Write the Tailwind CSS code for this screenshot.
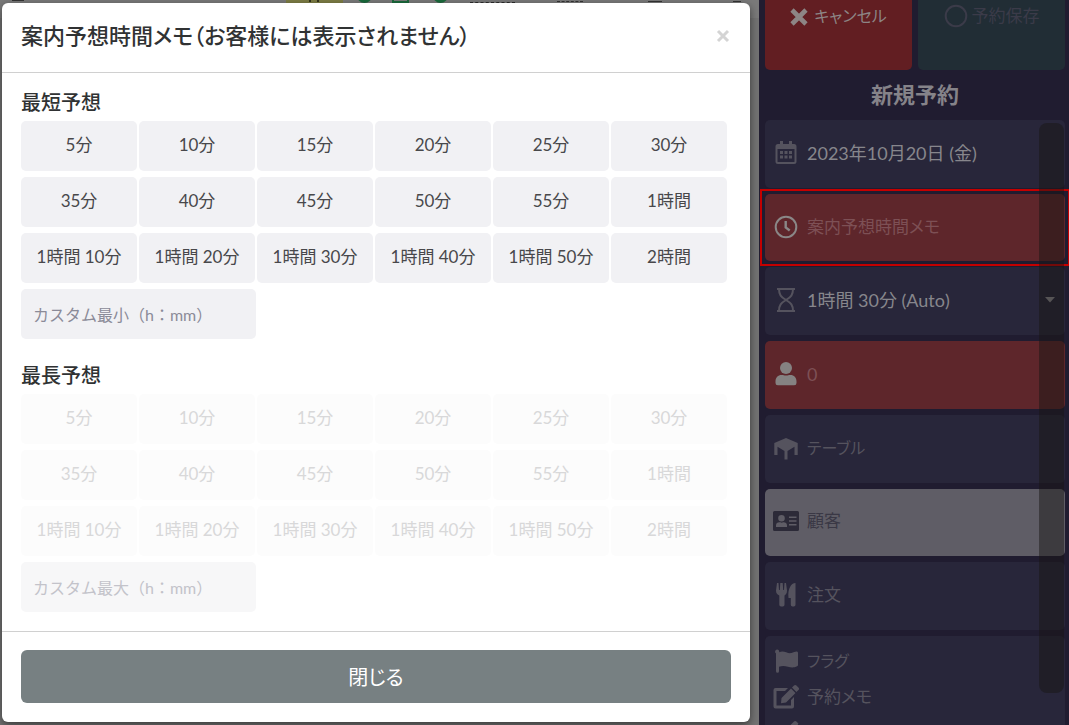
<!DOCTYPE html>
<html lang="ja">
<head>
    <meta charset="UTF-8">
    <meta name="viewport" content="width=device-width, initial-scale=1.0">
    <title>新規予約</title>
    <script src="https://cdn.jsdelivr.net/npm/@tailwindcss/browser@4"></script>
</head>
<body class="flex h-screen overflow-hidden bg-[#737373] font-[Lato,'Noto_Sans_CJK_JP',sans-serif] text-[17px] leading-6 text-[#303233]">

    <!-- Modal -->
    <main class="relative flex-1 min-w-0 pt-[3px] pl-0.5 pr-[9px]">
        <!-- Toolbar behind the modal -->
        <div class="absolute inset-x-0 top-0 h-[18px] bg-[#7a7a7a]" aria-hidden="true">
            <div class="absolute left-3 top-0 h-px w-3 bg-[#333]"></div>
            <div class="absolute left-[286px] top-0 h-1 w-[57px] bg-[#7d7d45]"></div>
            <div class="absolute left-[309px] top-0 h-0.5 w-2.5 border-x-2 border-[#33331c]"></div>
            <div class="absolute left-[357px] -top-3 size-[15px] rounded-full bg-[#1a6a3c]"></div>
            <div class="absolute left-[392px] -top-3 h-[15px] w-[17px] border-2 border-[#1a6a3c]"></div>
            <div class="absolute left-[433px] -top-3 size-[15px] rounded-full bg-[#1a6a3c]"></div>
            <div class="absolute left-[470px] top-0 h-[3px] w-[45px] border-b border-dashed border-[#2c2c2c]"></div>
            <div class="absolute left-[557px] top-0 h-0.5 w-[26px] border-b border-dashed border-[#333]"></div>
            <div class="absolute left-[648px] top-0 h-0.5 w-[14px] border-b border-[#333]"></div>
            <div class="absolute left-[733px] top-0 h-0.5 w-2 border-b border-[#333]"></div>
        </div>

        <section role="dialog" aria-labelledby="modalTitle" class="relative rounded-md bg-white shadow-[0_3px_9px_rgba(0,0,0,0.5)]">
            <header class="flex h-[70px] items-center justify-between border-b border-[#d0d0d0] px-[19px] pb-1">
                <h1 id="modalTitle" class="text-[22px] leading-8 font-medium [font-feature-settings:'palt']">案内予想時間メモ（お客様には表示されません）</h1>
                <button type="button" aria-label="閉じる" class="size-4 text-[#d4d4d4]">
                    <svg viewBox="0 0 16 16" class="size-4" fill="none" stroke="currentColor" stroke-width="3"><path d="M3 3l10 10M13 3L3 13"/></svg>
                </button>
            </header>

            <div class="pl-[19px] pr-[23px] pt-[15px] pb-[19px]">
                <h2 class="pb-[5px] text-[20px] leading-7 font-medium">最短予想</h2>
                <div id="minOptions" class="grid grid-cols-6 gap-x-0.5 gap-y-1.5"></div>
                <input type="text" aria-label="カスタム最小" placeholder="カスタム最小（h：mm）" class="mt-1.5 block h-[50px] w-1/3 rounded-[5px] bg-[#f1f1f4] px-3 text-base placeholder:text-[#8b8b98]">

                <h2 class="pt-[22px] pb-[5px] text-[20px] leading-7 font-medium">最長予想</h2>
                <div id="maxOptions" class="grid grid-cols-6 gap-x-0.5 gap-y-1.5"></div>
                <input type="text" disabled aria-label="カスタム最大" placeholder="カスタム最大（h：mm）" class="mt-1.5 block h-[50px] w-1/3 rounded-[5px] bg-[#f7f7f8] px-3 text-base placeholder:text-[#c3c3ca]">
            </div>

            <footer class="border-t border-[#d0d0d0] px-[19px] pt-[18px] pb-[19px]">
                <button type="button" class="block h-[53px] w-full rounded-md bg-[#778082] text-[20px] text-white [font-feature-settings:'palt']">閉じる</button>
            </footer>
        </section>
    </main>

    <!-- Reservation sidebar -->
    <aside class="relative w-[310px] shrink-0 bg-[#201c30] pl-1.5 pr-1 text-[#55535e]">
        <div class="grid h-[70px] grid-cols-2 gap-1.5">
            <button type="button" class="flex items-start justify-center gap-1.5 rounded-b-[5px] bg-[#621e22] pt-1 text-base text-[#8d8585] [font-feature-settings:'palt']">
                <svg viewBox="0 0 18 18" class="mt-1 size-[18px]" fill="none" stroke="currentColor" stroke-width="4.6"><path d="M2 2l14 14M16 2L2 16"/></svg>
                キャンセル
            </button>
            <button type="button" disabled class="flex items-start justify-center gap-1 rounded-b-[5px] bg-[#212d35] pt-1 text-[#3b3b49]">
                <svg viewBox="0 0 24 24" class="size-6" fill="none" stroke="currentColor" stroke-width="2"><circle cx="12" cy="12" r="10.3"/></svg>
                予約保存
            </button>
        </div>

        <h2 class="flex h-[50px] items-center justify-center text-[22px] font-bold text-[#858389]">新規予約</h2>

        <div class="grid h-[510px] auto-rows-fr gap-1.5">
            <button type="button" class="flex items-center rounded-[5px] bg-[#28263a] pb-0.5 pl-2 text-left">
                <svg viewBox="0 0 26 26" class="mr-2 size-[26px]" fill="currentColor">
                    <path fill-rule="evenodd" d="M7 1h3v3h6V1h3v3h2a2.500 2.500 0 0 1 2.500 2.500v15A2.500 2.500 0 0 1 21 24H5a2.500 2.500 0 0 1-2.500-2.500v-15A2.500 2.500 0 0 1 5 4h2zM4.500 9v12.500a.5.5 0 0 0 .5.5h16a.5.5 0 0 0 .5-.5V9z"/>
                    <path d="M7 11h3v3H7zM11.500 11h3v3h-3zM16 11h3v3h-3zM7 15.500h3v3H7zM11.500 15.500h3v3h-3zM16 15.500h3v3h-3z"/>
                </svg>
                <span class="text-[18px] text-[#87868c]">2023年10月20日 (金)</span>
            </button>
            <div class="grid outline-2 outline-offset-[3px] outline-[#c40000]">
                <button type="button" class="flex items-center rounded-[5px] bg-[#5e262b] pb-0.5 pl-2 text-left">
                    <svg viewBox="0 0 26 26" class="mr-2 size-[26px] text-[#8a8787]" fill="none" stroke="currentColor"><circle cx="13" cy="13" r="10.300" stroke-width="2"/><path d="M12.700 7v6.500l4 3" stroke-width="2.400"/></svg>
                    <span class="text-[#7d5055] [font-feature-settings:'palt']">案内予想時間メモ</span>
                </button>
            </div>
            <button type="button" class="flex items-center rounded-[5px] bg-[#28263a] pb-0.5 pl-2 pr-2.5 text-left">
                <svg viewBox="0 0 26 26" class="mr-2 size-[26px]" fill="none" stroke="currentColor" stroke-width="2"><path d="M4 2h18M4 24h18M6 2c0 6 2 8 7 11c5-3 7-5 7-11M6 24c0-6 2-8 7-11c5 3 7 5 7 11"/></svg>
                <span class="flex-1 text-[18px] text-[#87868c]">1時間 30分 (Auto)</span>
                <svg viewBox="0 0 10 6" class="h-1.5 w-2.5 text-[#8f8d90]" fill="currentColor"><path d="M0 0h10L5 5.500z"/></svg>
            </button>
            <button type="button" class="flex items-center rounded-[5px] bg-[#5e262b] pb-0.5 pl-2 text-left">
                <svg viewBox="0 0 26 26" class="mr-2 size-[26px] text-[#858282]" fill="currentColor"><circle cx="13" cy="7" r="6"/><path d="M2.500 20.500c0-4 2.500-6.500 6-6.500c2 0 2.500.6 4.500.6s2.500-.6 4.500-.6c3.500 0 6 2.500 6 6.500V22a2.300 2.300 0 0 1-2.300 2.300H4.800A2.300 2.300 0 0 1 2.500 22z"/></svg>
                <span class="text-[18px] text-[#7d5055]">0</span>
            </button>
            <button type="button" class="flex items-center rounded-[5px] bg-[#28263a] pb-0.5 pl-2 text-left">
                <svg viewBox="0 0 26 26" class="mr-2 size-[26px]" fill="currentColor"><path d="M13 3l11.700 5v12H21.500v-8.300L14.500 16v8.500h-3V16L4.500 11.700V20H1.300V8z"/></svg>
                <span class="text-base [font-feature-settings:'palt']">テーブル</span>
            </button>
            <button type="button" class="flex items-center rounded-[5px] bg-[#5f5d66] pb-0.5 pl-2 text-left text-[#2c2a38]">
                <svg viewBox="0 0 26 26" class="mr-2 size-[26px]" fill="currentColor">
                    <path fill-rule="evenodd" d="M1.500 3h23A1.500 1.500 0 0 1 26 4.500v17a1.500 1.500 0 0 1-1.500 1.500h-23A1.500 1.500 0 0 1 0 21.500v-17A1.500 1.500 0 0 1 1.500 3zM8.500 7a3.300 3.300 0 1 0 0 6.600a3.300 3.300 0 0 0 0-6.600zM3 19h11v-1.500c0-2-1.500-3.200-3.300-3.200c-1 0-1.200.4-2.200.4s-1.200-.4-2.200-.4C4.500 14.300 3 15.500 3 17.500zM16 8.500v1.600h7.500V8.500zm0 3.700v1.600h7.500v-1.600zm0 3.700v1.600h7.500v-1.600z"/>
                </svg>
                <span class="text-[#3a3845]">顧客</span>
            </button>
            <button type="button" class="flex items-center rounded-[5px] bg-[#28263a] pb-0.5 pl-2 text-left">
                <svg viewBox="0 0 26 26" class="mr-2 size-[26px]" fill="currentColor"><path d="M4 1h1.500l.5 7h.8L7.300 1h2.400l.5 7h.8l.5-7H13l1 7.500c0 3-1.200 4.200-2.500 5v9.300a1.700 1.700 0 0 1-1.700 1.700H8a1.700 1.700 0 0 1-1.700-1.700v-9.300C4.500 12.700 3 11.500 3 8.500zM22.500 1v21.800a1.700 1.700 0 0 1-1.700 1.700h-1.300a1.700 1.700 0 0 1-1.700-1.700V16H15.500C14.500 7 18 1 22.500 1z"/></svg>
                <span>注文</span>
            </button>
        </div>

        <div class="mt-1.5 flex flex-col gap-2.5 rounded-t-[5px] bg-[#28263a] pl-2 pt-3">
            <button type="button" class="flex items-center text-left">
                <svg viewBox="0 0 26 26" class="mr-2 size-[26px]" fill="currentColor"><path d="M4 1.500a2.200 2.200 0 0 1 2.200 2.700c5-2.200 8 1.800 12.300.8c2-.4 3.500-1.500 5-1.500c.9 0 1.500.6 1.500 1.400V17c0 .6-.3 1-.9 1.300c-6.600 3.400-10.600-2-18.100.5v4.400a1.500 1.500 0 0 1-3 0V5.500A2.200 2.200 0 0 1 4 1.500z"/></svg>
                <span class="text-base [font-feature-settings:'palt']">フラグ</span>
            </button>
            <button type="button" class="flex items-center text-left">
                <svg viewBox="0 0 26 26" class="mr-2 size-[26px]" fill="currentColor"><path d="M2.500 4H15l-3 3H3.500v14.500H18V16l3-3v9.500a2 2 0 0 1-2 2H2.500a2 2 0 0 1-2-2V6a2 2 0 0 1 2-2zM18 4.500l4.500 4.500L13 18.500l-5 .8l.5-5.300zM19 3.500l2-2a1.700 1.700 0 0 1 2.400 0l2 2a1.700 1.700 0 0 1 0 2.500l-2 2z"/></svg>
                <span class="[font-feature-settings:'palt']">予約メモ</span>
            </button>
            <svg viewBox="0 0 26 26" class="size-[26px]" fill="currentColor" aria-hidden="true"><path d="M19 3.500l2-2a1.700 1.700 0 0 1 2.400 0l2 2L22.500 9L13 18.500l-5 .8l.5-5.300z"/></svg>
        </div>

        <!-- Scrollbar thumb over the cards -->
        <div class="absolute right-[5px] top-[123px] h-[570px] w-[25px] rounded-lg bg-[#171614]/47"></div>
    </aside>

    <script>
        const labels = [
            '5分', '10分', '15分', '20分', '25分', '30分',
            '35分', '40分', '45分', '50分', '55分', '1時間',
            '1時間 10分', '1時間 20分', '1時間 30分', '1時間 40分', '1時間 50分', '2時間'
        ];

        function renderOptions(id, className, disabled) {
            const container = document.getElementById(id);
            labels.forEach(label => {
                const button = document.createElement('button');
                button.type = 'button';
                button.className = className;
                button.disabled = disabled;
                button.textContent = label;
                container.appendChild(button);
            });
        }

        renderOptions('minOptions', 'h-[50px] rounded-[5px] bg-[#f1f1f4] pb-0.5 whitespace-nowrap text-[#48484b]', false);
        renderOptions('maxOptions', 'h-[50px] rounded-[5px] bg-[#fcfcfc] pb-0.5 whitespace-nowrap text-[#d8d8d9]', true);
    </script>
</body>
</html>
